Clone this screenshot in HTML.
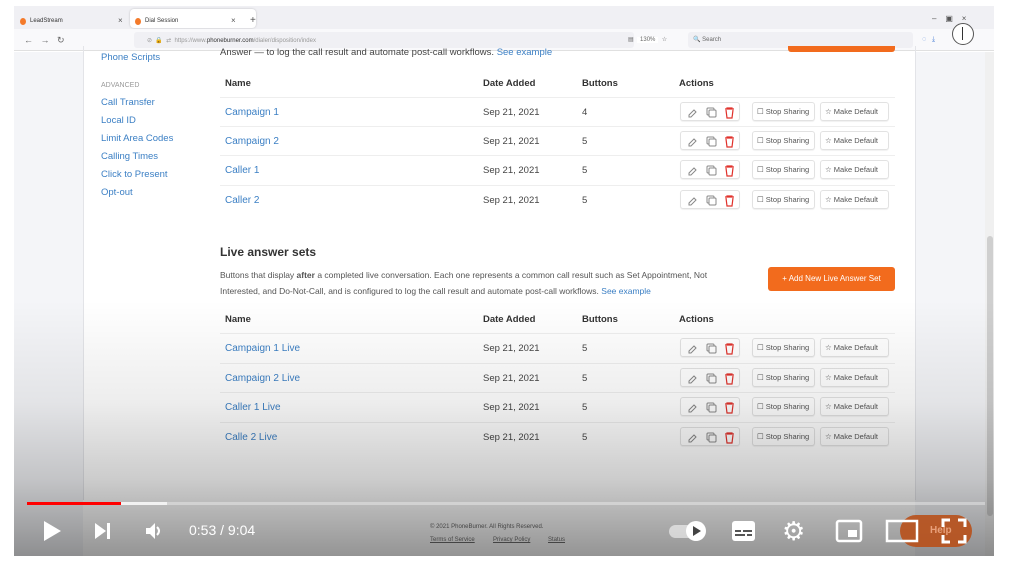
<!DOCTYPE html>
<html><head><meta charset="utf-8"><style>
*{margin:0;padding:0;box-sizing:border-box}
body{width:1009px;height:573px;background:#fff;position:relative;overflow:hidden;font-family:"Liberation Sans",sans-serif}
.a{position:absolute;white-space:nowrap}
.lnk{color:#3b7fc4;font-size:10px}
.side{color:#3b7fc4;font-size:9.5px;left:101px}
.th{font-size:9.5px;color:#333;font-weight:bold}
.td{font-size:9.5px;color:#444}
.grp{position:absolute;left:680px;width:60px;height:19px;border:1px solid #e2e2e2;border-radius:3px;background:#fff;box-shadow:0 1px 1px rgba(0,0,0,.06)}
.btn{position:absolute;height:19px;border:1px solid #e2e2e2;border-radius:3px;background:#fff;font-size:7.5px;color:#555;line-height:17px;padding-left:4px;box-shadow:0 1px 1px rgba(0,0,0,.06)}
.line{position:absolute;left:220px;width:675px;height:1px;background:#eee}
.ic{position:absolute}
</style></head><body>
<div class="a" style="left:14px;top:6px;width:980px;height:550px;background:#fff;overflow:hidden">
 <div class="a" style="left:0;top:0;width:980px;height:23px;background:#f0f0f4"></div>
 <div class="a" style="left:116px;top:3px;width:126px;height:19px;background:#fff;border-radius:4px;box-shadow:0 0 2px rgba(0,0,0,.2)"></div>
 <div class="a" style="left:6px;top:12px;width:6px;height:7px;background:#f47a2a;border-radius:50%"></div>
 <div class="a" style="left:16px;top:12px;font-size:6px;color:#333">LeadStream</div>
 <div class="a" style="left:104px;top:10px;font-size:8px;color:#555">×</div>
 <div class="a" style="left:121px;top:12px;width:6px;height:7px;background:#f47a2a;border-radius:50%"></div>
 <div class="a" style="left:131px;top:12px;font-size:6px;color:#333">Dial Session</div>
 <div class="a" style="left:217px;top:10px;font-size:8px;color:#555">×</div>
 <div class="a" style="left:236px;top:9px;font-size:10px;color:#555">+</div>
 <div class="a" style="left:918px;top:8px;font-size:8px;color:#555">–&nbsp;&nbsp;&nbsp;&nbsp;▣&nbsp;&nbsp;&nbsp;&nbsp;×</div>
 <div class="a" style="left:0;top:23px;width:980px;height:22px;background:#f9f9fb;border-bottom:1px solid #e0e0e0"></div>
 <div class="a" style="left:10px;top:29px;font-size:9px;color:#666">←&nbsp;&nbsp;&nbsp;→&nbsp;&nbsp;&nbsp;↻</div>
 <div class="a" style="left:120px;top:26px;width:500px;height:16px;background:#f0f0f4;border-radius:3px"></div>
 <div class="a" style="left:133px;top:31px;font-size:6px;color:#999">⊘&nbsp;&nbsp;🔒&nbsp;&nbsp;⇄&nbsp;&nbsp;https://www.<span style="color:#333">phoneburner.com</span>/dialer/disposition/index</div>
 <div class="a" style="left:614px;top:30px;font-size:6px;color:#666">▤&nbsp;&nbsp;<span style="background:#fff;padding:0 3px">130%</span>&nbsp;&nbsp;☆</div>
 <div class="a" style="left:674px;top:26px;width:225px;height:16px;background:#f0f0f4;border-radius:3px"></div>
 <div class="a" style="left:679px;top:30px;font-size:6px;color:#666">🔍 Search</div>
 <div class="a" style="left:908px;top:30px;font-size:7px;color:#4a7fd6">◌&nbsp;&nbsp;&nbsp;⤓</div>
 <div class="a" style="left:938px;top:17px;width:22px;height:22px;border-radius:50%;background:#fff;border:1px solid #555"></div>
 <div class="a" style="left:948px;top:21px;width:1px;height:13px;background:#333"></div>
 <div class="a" style="left:0;top:46px;width:69px;height:504px;background:#f4f5f8"></div>
 <div class="a" style="left:901px;top:46px;width:70px;height:504px;background:#f4f5f8"></div>
 <div class="a" style="left:971px;top:46px;width:9px;height:504px;background:#f0f0f0"></div>
 <div class="a" style="left:973px;top:230px;width:6px;height:280px;background:#cfcfcf;border-radius:3px"></div>
</div>
<div class="a" style="left:788px;top:46px;width:107px;height:6px;background:#f26b1d;border-radius:0 0 3px 3px"></div>
<div class="a side" style="top:52px">Phone Scripts</div>
<div class="a" style="left:101px;top:82px;font-size:7px;color:#999">ADVANCED</div>
<div class="a side" style="top:97px">Call Transfer</div>
<div class="a side" style="top:115px">Local ID</div>
<div class="a side" style="top:133px">Limit Area Codes</div>
<div class="a side" style="top:151px">Calling Times</div>
<div class="a side" style="top:169px">Click to Present</div>
<div class="a side" style="top:187px">Opt-out</div>
<div class="a" style="left:220px;top:47px;font-size:9.5px;color:#444">Answer — to log the call result and automate post-call workflows. <span class="lnk" style="font-size:9.5px">See example</span></div>

<svg width="0" height="0" style="position:absolute"><defs>
<g id="acts"><path d="M9 13 L14 8 L16 10 L11 15 L9 15Z" stroke="#888" stroke-width="1" fill="none"/>
<rect x="27" y="6" width="7" height="7" rx="1" stroke="#888" fill="none"/><rect x="29" y="8" width="7" height="7" rx="1" stroke="#888" fill="#fff"/>
<path d="M45 7 H54 M47 7 V6 H52 V7 M46 8 L47 16 H52 L53 8" stroke="#e0312b" stroke-width="1.2" fill="none"/></g>
</defs></svg>

<div class="a th" style="left:225px;top:78px">Name</div><div class="a th" style="left:483px;top:78px">Date Added</div><div class="a th" style="left:582px;top:78px">Buttons</div><div class="a th" style="left:679px;top:78px">Actions</div>
<div class="line" style="top:97px"></div>

<div class="a lnk" style="left:225px;top:107px">Campaign 1</div><div class="a td" style="left:483px;top:107px">Sep 21, 2021</div><div class="a td" style="left:582px;top:107px">4</div>
<div class="grp" style="top:102px"></div><svg class="ic" style="left:680px;top:102px" width="60" height="20"><use href="#acts"/></svg>
<div class="btn" style="left:752px;top:102px;width:63px">☐ Stop Sharing</div><div class="btn" style="left:820px;top:102px;width:69px">☆ Make Default</div>
<div class="line" style="top:126px"></div>

<div class="a lnk" style="left:225px;top:136px">Campaign 2</div><div class="a td" style="left:483px;top:136px">Sep 21, 2021</div><div class="a td" style="left:582px;top:136px">5</div>
<div class="grp" style="top:131px"></div><svg class="ic" style="left:680px;top:131px" width="60" height="20"><use href="#acts"/></svg>
<div class="btn" style="left:752px;top:131px;width:63px">☐ Stop Sharing</div><div class="btn" style="left:820px;top:131px;width:69px">☆ Make Default</div>
<div class="line" style="top:155px"></div>

<div class="a lnk" style="left:225px;top:165px">Caller 1</div><div class="a td" style="left:483px;top:165px">Sep 21, 2021</div><div class="a td" style="left:582px;top:165px">5</div>
<div class="grp" style="top:160px"></div><svg class="ic" style="left:680px;top:160px" width="60" height="20"><use href="#acts"/></svg>
<div class="btn" style="left:752px;top:160px;width:63px">☐ Stop Sharing</div><div class="btn" style="left:820px;top:160px;width:69px">☆ Make Default</div>
<div class="line" style="top:185px"></div>

<div class="a lnk" style="left:225px;top:195px">Caller 2</div><div class="a td" style="left:483px;top:195px">Sep 21, 2021</div><div class="a td" style="left:582px;top:195px">5</div>
<div class="grp" style="top:190px"></div><svg class="ic" style="left:680px;top:190px" width="60" height="20"><use href="#acts"/></svg>
<div class="btn" style="left:752px;top:190px;width:63px">☐ Stop Sharing</div><div class="btn" style="left:820px;top:190px;width:69px">☆ Make Default</div>

<div class="a" style="left:220px;top:245px;font-size:12px;font-weight:bold;color:#333">Live answer sets</div>
<div class="a" style="left:220px;top:268px;font-size:8.5px;color:#555;line-height:15.5px">Buttons that display <b>after</b> a completed live conversation. Each one represents a common call result such as Set Appointment, Not<br>Interested, and Do-Not-Call, and is configured to log the call result and automate post-call workflows. <span style="color:#3b7fc4">See example</span></div>
<div class="a" style="left:768px;top:267px;width:127px;height:24px;background:#f26b1d;border-radius:3px;color:#fff;font-size:8px;line-height:24px;text-align:center">+ Add New Live Answer Set</div>

<div class="a th" style="left:225px;top:314px">Name</div><div class="a th" style="left:483px;top:314px">Date Added</div><div class="a th" style="left:582px;top:314px">Buttons</div><div class="a th" style="left:679px;top:314px">Actions</div>
<div class="line" style="top:333px"></div>

<div class="a lnk" style="left:225px;top:343px">Campaign 1 Live</div><div class="a td" style="left:483px;top:343px">Sep 21, 2021</div><div class="a td" style="left:582px;top:343px">5</div>
<div class="grp" style="top:338px"></div><svg class="ic" style="left:680px;top:338px" width="60" height="20"><use href="#acts"/></svg>
<div class="btn" style="left:752px;top:338px;width:63px">☐ Stop Sharing</div><div class="btn" style="left:820px;top:338px;width:69px">☆ Make Default</div>
<div class="line" style="top:363px"></div>

<div class="a lnk" style="left:225px;top:373px">Campaign 2 Live</div><div class="a td" style="left:483px;top:373px">Sep 21, 2021</div><div class="a td" style="left:582px;top:373px">5</div>
<div class="grp" style="top:368px"></div><svg class="ic" style="left:680px;top:368px" width="60" height="20"><use href="#acts"/></svg>
<div class="btn" style="left:752px;top:368px;width:63px">☐ Stop Sharing</div><div class="btn" style="left:820px;top:368px;width:69px">☆ Make Default</div>
<div class="line" style="top:392px"></div>

<div class="a lnk" style="left:225px;top:402px">Caller 1 Live</div><div class="a td" style="left:483px;top:402px">Sep 21, 2021</div><div class="a td" style="left:582px;top:402px">5</div>
<div class="grp" style="top:397px"></div><svg class="ic" style="left:680px;top:397px" width="60" height="20"><use href="#acts"/></svg>
<div class="btn" style="left:752px;top:397px;width:63px">☐ Stop Sharing</div><div class="btn" style="left:820px;top:397px;width:69px">☆ Make Default</div>
<div class="line" style="top:422px"></div>

<div class="a lnk" style="left:225px;top:432px">Calle 2 Live</div><div class="a td" style="left:483px;top:432px">Sep 21, 2021</div><div class="a td" style="left:582px;top:432px">5</div>
<div class="grp" style="top:427px"></div><svg class="ic" style="left:680px;top:427px" width="60" height="20"><use href="#acts"/></svg>
<div class="btn" style="left:752px;top:427px;width:63px">☐ Stop Sharing</div><div class="btn" style="left:820px;top:427px;width:69px">☆ Make Default</div>

<div class="a" style="left:83px;top:46px;width:1px;height:454px;background:#e3e4e8"></div>
<div class="a" style="left:915px;top:46px;width:1px;height:454px;background:#e3e4e8"></div>

<div class="a" style="left:14px;top:300px;width:980px;height:256px;background:linear-gradient(to bottom,rgba(0,0,0,0) 0%,rgba(0,0,0,.07) 40%,rgba(0,0,0,.2) 70%,rgba(0,0,0,.42) 100%)"></div>
<div class="a" style="left:430px;top:524px;font-size:6px;color:#444">© 2021 PhoneBurner. All Rights Reserved.</div>
<div class="a" style="left:430px;top:537px;font-size:6px;color:#444;text-decoration:underline">Terms of Service</div>
<div class="a" style="left:493px;top:537px;font-size:6px;color:#444;text-decoration:underline">Privacy Policy</div>
<div class="a" style="left:548px;top:537px;font-size:6px;color:#444;text-decoration:underline">Status</div>
<div class="a" style="left:27px;top:502px;width:958px;height:3px;background:rgba(255,255,255,.35)"></div>
<div class="a" style="left:27px;top:502px;width:140px;height:3px;background:rgba(255,255,255,.7)"></div>
<div class="a" style="left:27px;top:502px;width:94px;height:3px;background:#f00"></div>
<svg class="a" style="left:40px;top:519px" width="24" height="24"><path d="M4 2 L21 12 L4 22Z" fill="#fff"/></svg>
<svg class="a" style="left:93px;top:521px" width="20" height="20"><path d="M2 2 L13 10 L2 18Z" fill="#fff"/><rect x="14" y="2" width="3" height="16" fill="#fff"/></svg>
<svg class="a" style="left:144px;top:521px" width="20" height="20"><path d="M2 7 H6 L11 2 V18 L6 13 H2Z" fill="#fff"/><path d="M13 6 Q17 10 13 14" stroke="#fff" stroke-width="2" fill="none"/></svg>
<div class="a" style="left:189px;top:522px;font-size:14px;color:#fff">0:53 / 9:04</div>
<div class="a" style="left:669px;top:525px;width:32px;height:13px;border-radius:7px;background:rgba(255,255,255,.55)"></div>
<div class="a" style="left:686px;top:521px;width:20px;height:20px;border-radius:50%;background:#fff"></div>
<svg class="a" style="left:692px;top:526px" width="10" height="10"><path d="M1 0 L9 5 L1 10Z" fill="#444"/></svg>
<svg class="a" style="left:731px;top:520px" width="25" height="22"><rect x="1" y="1" width="23" height="20" rx="3" fill="#fff"/><rect x="4" y="10" width="6" height="2" fill="#555"/><rect x="12" y="10" width="9" height="2" fill="#555"/><rect x="4" y="14" width="10" height="2" fill="#555"/><rect x="16" y="14" width="5" height="2" fill="#555"/></svg>
<div class="a" style="left:782px;top:514px;font-size:26px;color:#fff;line-height:34px">⚙</div>
<svg class="a" style="left:835px;top:519px" width="28" height="24"><rect x="2" y="2" width="24" height="20" rx="2" stroke="#fff" stroke-width="2.5" fill="none"/><rect x="13" y="11" width="9" height="7" fill="#fff"/></svg>
<div class="a" style="left:900px;top:515px;width:72px;height:32px;border-radius:16px;background:#b8501a;opacity:.9"></div>
<div class="a" style="left:930px;top:525px;font-size:10px;color:#e8a07a;font-weight:bold">Help</div>
<svg class="a" style="left:885px;top:519px" width="34" height="24"><rect x="2" y="2" width="30" height="20" stroke="#fff" stroke-width="2.5" fill="none"/></svg>
<svg class="a" style="left:941px;top:518px" width="26" height="26"><path d="M2 9 V2 H9 M17 2 H24 V9 M24 17 V24 H17 M9 24 H2 V17" stroke="#fff" stroke-width="3" fill="none"/></svg>
</body></html>
